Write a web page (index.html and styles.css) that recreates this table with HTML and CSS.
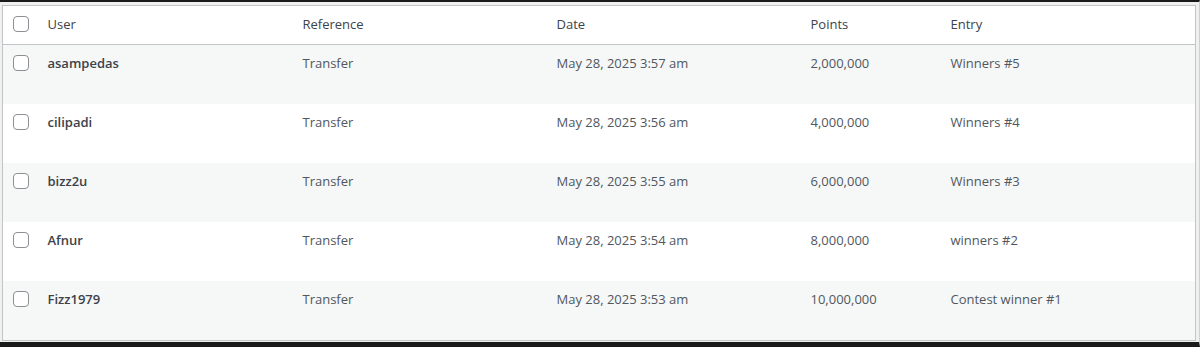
FILE: index.html
```html
<!DOCTYPE html>
<html lang="en">
<head>
  <meta charset="UTF-8">
  <title>Points log</title>
  <link rel="stylesheet" href="styles.css">
</head>
<body>
  <div class="frame">
    <table class="log-table">
      <colgroup>
        <col class="col-check">
        <col class="col-user">
        <col class="col-ref">
        <col class="col-date">
        <col class="col-points">
        <col>
      </colgroup>
      <thead>
        <tr>
          <th class="check"><span class="box"></span></th>
          <th>User</th>
          <th>Reference</th>
          <th>Date</th>
          <th>Points</th>
          <th>Entry</th>
        </tr>
      </thead>
      <tbody>
        <tr>
          <td class="check"><span class="box"></span></td>
          <td class="user">asampedas</td>
          <td>Transfer</td>
          <td>May 28, 2025 3:57 am</td>
          <td>2,000,000</td>
          <td>Winners #5</td>
        </tr>
        <tr>
          <td class="check"><span class="box"></span></td>
          <td class="user">cilipadi</td>
          <td>Transfer</td>
          <td>May 28, 2025 3:56 am</td>
          <td>4,000,000</td>
          <td>Winners #4</td>
        </tr>
        <tr>
          <td class="check"><span class="box"></span></td>
          <td class="user">bizz2u</td>
          <td>Transfer</td>
          <td>May 28, 2025 3:55 am</td>
          <td>6,000,000</td>
          <td>Winners #3</td>
        </tr>
        <tr>
          <td class="check"><span class="box"></span></td>
          <td class="user">Afnur</td>
          <td>Transfer</td>
          <td>May 28, 2025 3:54 am</td>
          <td>8,000,000</td>
          <td>winners #2</td>
        </tr>
        <tr>
          <td class="check"><span class="box"></span></td>
          <td class="user">Fizz1979</td>
          <td>Transfer</td>
          <td>May 28, 2025 3:53 am</td>
          <td>10,000,000</td>
          <td>Contest winner #1</td>
        </tr>
      </tbody>
    </table>
  </div>
</body>
</html>
```

FILE: styles.css
```css
* {
  box-sizing: border-box;
}

body {
  margin: 0;
  background: #f0f0f1;
  font-family: 'Open Sans', 'Noto Sans', sans-serif;
  font-size: 13px;
  color: #50575e;
}

.frame {
  height: 347px;
  border-top: 2px solid #1a1a1a;
  border-bottom: 5px solid #1a1a1a;
  border-right: 1px solid #d0d0d0;
  padding: 3px 3px 0 2px;
}

.log-table {
  width: 100%;
  table-layout: fixed;
  border-collapse: collapse;
  border: 1px solid #c3c4c7;
  background: #fff;
}

.col-check { width: 35px; }
.col-user { width: 255px; }
.col-ref { width: 254px; }
.col-date { width: 254px; }
.col-points { width: 140px; }

th,
td {
  text-align: left;
  font-weight: 400;
  line-height: 20px;
  padding: 8px 10px 10px;
  vertical-align: top;
  white-space: nowrap;
}

thead th {
  color: #3c434a;
  border-bottom: 1px solid #c3c4c7;
}

tbody td {
  padding-bottom: 31px;
}

tbody tr:nth-child(odd) {
  background: #f6f7f7;
}

.check {
  padding-left: 10px;
  padding-right: 0;
}

.box {
  display: block;
  width: 16px;
  height: 16px;
  margin-top: 2px;
  border: 1px solid #8c8f94;
  border-radius: 4px;
  background: #fff;
}

.user {
  font-weight: 600;
  color: #3c434a;
}
```
